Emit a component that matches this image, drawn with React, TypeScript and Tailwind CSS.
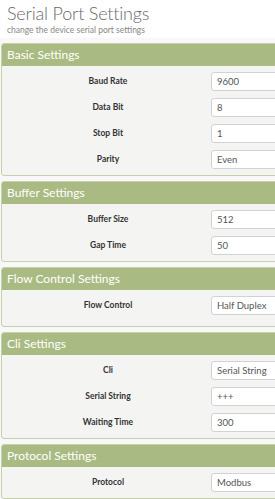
import React from "react";

type Row = { label: string; value: string };
type Section = { title: string; rows: Row[]; extraBottom?: boolean };

const sections: Section[] = [
  {
    title: "Basic Settings",
    rows: [
      { label: "Baud Rate", value: "9600" },
      { label: "Data Bit", value: "8" },
      { label: "Stop Bit", value: "1" },
      { label: "Parity", value: "Even" },
    ],
  },
  {
    title: "Buffer Settings",
    rows: [
      { label: "Buffer Size", value: "512" },
      { label: "Gap Time", value: "50" },
    ],
  },
  {
    title: "Flow Control Settings",
    rows: [{ label: "Flow Control", value: "Half Duplex" }],
    extraBottom: true,
  },
  {
    title: "Cli Settings",
    rows: [
      { label: "Cli", value: "Serial String" },
      { label: "Serial String", value: "+++" },
      { label: "Waiting Time", value: "300" },
    ],
  },
  {
    title: "Protocol Settings",
    rows: [{ label: "Protocol", value: "Modbus" }],
  },
];

function Panel({ s }: { s: Section }) {
  return (
    <div className="mb-[5px] ml-[1px] w-[320px] rounded-[3px] border border-[#c6d0ab] bg-[#f4f5f3] overflow-hidden">
      <div className="h-[22px] bg-[#a9bb82] pl-[5px] flex items-center text-white text-[12px] leading-none">
        {s.title}
      </div>
      <div
        className={
          "flex flex-col gap-[7px] pt-[6px] " +
          (s.extraBottom ? "pb-[11px]" : "pb-[6px]")
        }
      >
        {s.rows.map((r) => (
          <div key={r.label} className="flex items-center h-[19px]">
            <div className="w-[209px] pl-[3px] text-center text-[8.5px] font-bold text-[#333] leading-none">
              {r.label}
            </div>
            <div className="h-[19px] flex-1 rounded-[3px] border border-[#d2d2d2] bg-white flex items-center pl-[5px] text-[9.5px] text-[#555] leading-none">
              {r.value}
            </div>
          </div>
        ))}
      </div>
    </div>
  );
}

export default function App() {
  return (
    <div
      className="w-[275px] h-[499px] overflow-hidden bg-white"
      style={{ fontFamily: "Lato, 'Open Sans', sans-serif" }}
    >
      <div className="h-[38px] bg-white pl-[7px]">
        <div className="pt-[1px] text-[18px] font-light tracking-[-0.2px] text-[#6a6a6a] leading-[24px]">
          Serial Port Settings
        </div>
        <div className="text-[8.5px] text-[#888] leading-[10px]">
          change the device serial port settings
        </div>
      </div>
      <div className="bg-[#f8f8f8] pt-[5px] h-[461px]">
        {sections.map((s) => (
          <Panel key={s.title} s={s} />
        ))}
      </div>
    </div>
  );
}
